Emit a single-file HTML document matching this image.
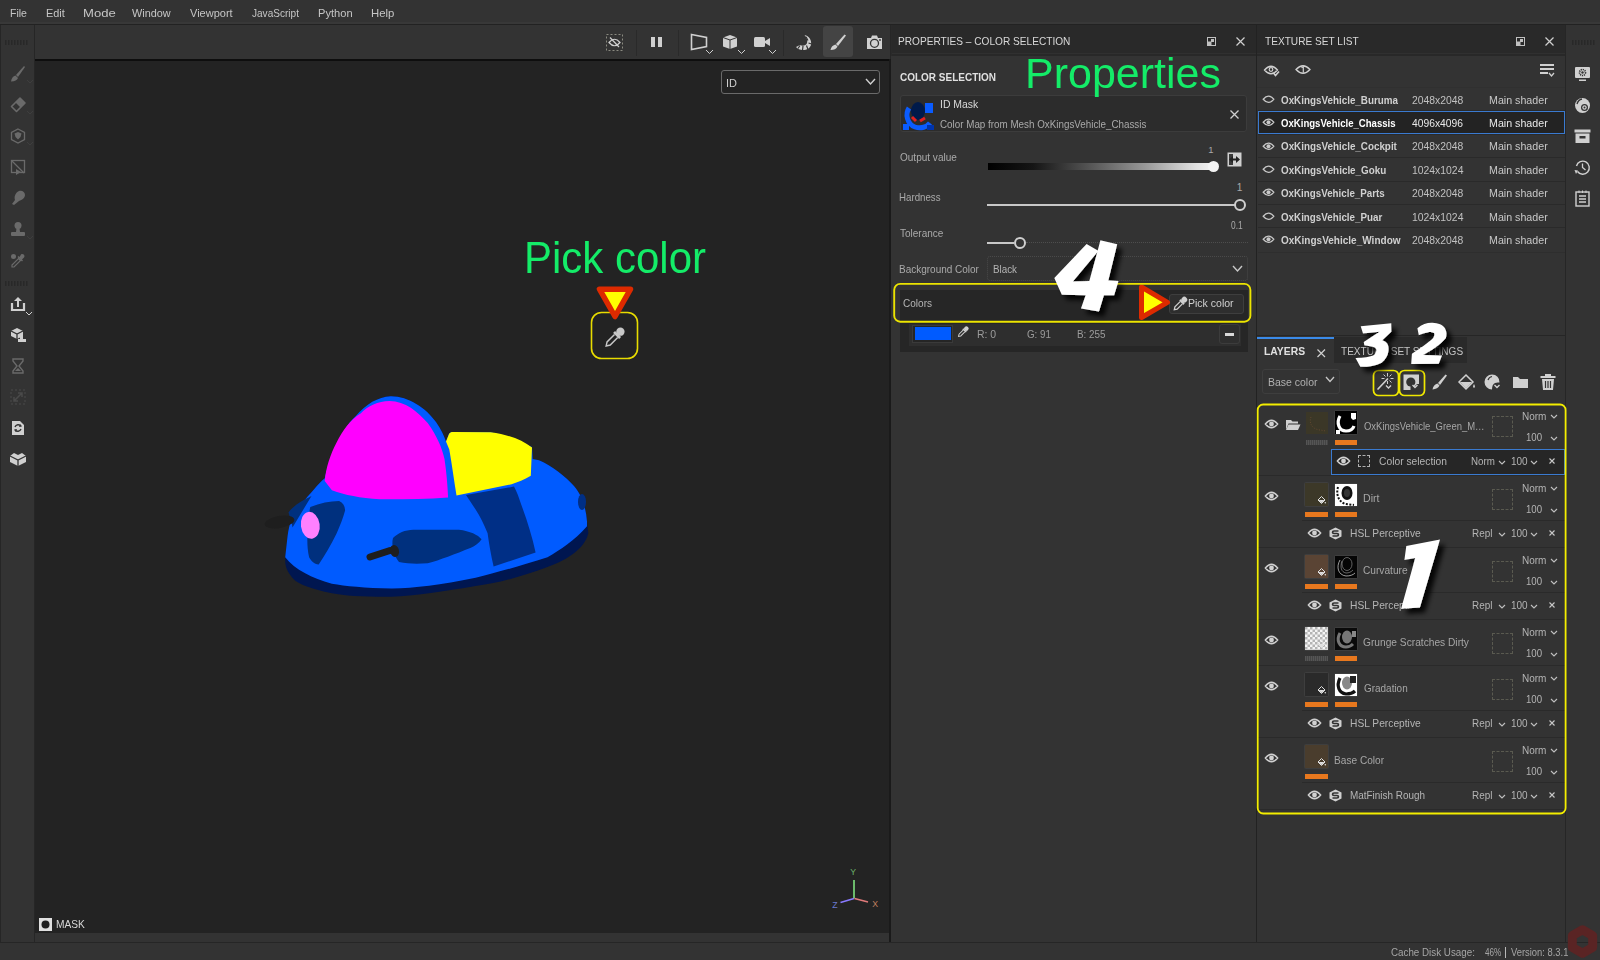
<!DOCTYPE html>
<html><head><meta charset="utf-8"><style>
html,body{margin:0;padding:0;}
body{width:1600px;height:960px;overflow:hidden;position:relative;background:#333;font-family:"Liberation Sans",sans-serif;}
.a{position:absolute;}
.t{position:absolute;z-index:5;white-space:nowrap;transform-origin:0 0;line-height:normal;}
svg.a{overflow:visible;}
</style></head><body>
<div class="a" style="left:0px;top:0px;width:1600px;height:22px;background:#333;"></div>
<div class="a" style="left:0px;top:22px;width:1600px;height:2px;background:#383838;"></div>
<div class="a" style="left:0px;top:24px;width:1600px;height:1px;background:#222;"></div>
<div class="a" style="left:0px;top:25px;width:1px;height:918px;background:#262626;"></div>
<div class="a" style="left:1px;top:25px;width:33px;height:917px;background:#333;"></div>
<div class="a" style="left:34px;top:25px;width:1px;height:917px;background:#262626;"></div>
<div class="a" style="left:35px;top:25px;width:855px;height:34px;background:#333;"></div>
<div class="a" style="left:35px;top:59px;width:854px;height:2px;background:#0e0e0e;"></div>
<div class="a" style="left:35px;top:61px;width:854px;height:872px;background:#232323;"></div>
<div class="a" style="left:889px;top:59px;width:2px;height:883px;background:#1a1a1a;"></div>
<div class="a" style="left:890px;top:25px;width:1px;height:34px;background:#262626;"></div>
<div class="a" style="left:35px;top:933px;width:854px;height:9px;background:#333;"></div>
<div class="a" style="left:0px;top:942px;width:1600px;height:1px;background:#262626;"></div>
<div class="a" style="left:0px;top:943px;width:1600px;height:17px;background:#333;"></div>
<div class="a" style="left:891px;top:56px;width:365px;height:886px;background:#333;"></div>
<div class="a" style="left:891px;top:25px;width:1px;height:31px;background:#2a2a2a;"></div>
<div class="a" style="left:892px;top:25px;width:364px;height:31px;background:#333;"></div>
<div class="a" style="left:892px;top:25px;width:364px;height:28px;background:#292929;"></div>
<div class="a" style="left:892px;top:53px;width:364px;height:1px;background:#303030;"></div>
<div class="a" style="left:892px;top:54px;width:364px;height:2px;background:#282828;"></div>
<div class="a" style="left:1256px;top:25px;width:1px;height:917px;background:#222;"></div>
<div class="a" style="left:1257px;top:25px;width:308px;height:310px;background:#333;"></div>
<div class="a" style="left:1257px;top:25px;width:308px;height:28px;background:#292929;"></div>
<div class="a" style="left:1257px;top:53px;width:308px;height:1px;background:#303030;"></div>
<div class="a" style="left:1257px;top:54px;width:308px;height:2px;background:#282828;"></div>
<div class="a" style="left:1565px;top:25px;width:1px;height:917px;background:#262626;"></div>
<div class="a" style="left:1566px;top:25px;width:34px;height:917px;background:#333;"></div>
<div class="a" style="left:1257px;top:335px;width:308px;height:1px;background:#262626;"></div>
<div class="a" style="left:1257px;top:336px;width:308px;height:606px;background:#333;"></div>
<div class="t" style="left:9.76px;top:6.50px;font-size:11.48px;color:#c6c6c6;transform:scaleX(0.918);">File</div>
<div class="t" style="left:45.63px;top:6.50px;font-size:11.48px;color:#c6c6c6;transform:scaleX(0.951);">Edit</div>
<div class="t" style="left:83.35px;top:6.50px;font-size:11.48px;color:#c6c6c6;transform:scaleX(1.142);">Mode</div>
<div class="t" style="left:131.90px;top:6.50px;font-size:11.48px;color:#c6c6c6;transform:scaleX(0.947);">Window</div>
<div class="t" style="left:190.30px;top:6.50px;font-size:11.48px;color:#c6c6c6;transform:scaleX(0.961);">Viewport</div>
<div class="t" style="left:252.05px;top:6.50px;font-size:11.48px;color:#c6c6c6;transform:scaleX(0.877);">JavaScript</div>
<div class="t" style="left:318.31px;top:6.50px;font-size:11.48px;color:#c6c6c6;transform:scaleX(0.968);">Python</div>
<div class="t" style="left:371.39px;top:6.50px;font-size:11.48px;color:#c6c6c6;transform:scaleX(0.990);">Help</div>
<div class="t" style="left:897.69px;top:34.94px;font-size:11.34px;color:#d8d8d8;transform:scaleX(0.893);">PROPERTIES – COLOR SELECTION</div>
<div class="t" style="left:899.60px;top:71.13px;font-size:10.90px;color:#e0e0e0;font-weight:bold;transform:scaleX(0.917);">COLOR SELECTION</div>
<div class="a" style="left:900px;top:95px;width:347px;height:37px;background:#2c2c2c;border:1px solid #3c3c3c;border-radius:3px;box-sizing:border-box;"></div>
<div class="t" style="left:939.56px;top:97.96px;font-size:10.76px;color:#d8d8d8;transform:scaleX(0.971);">ID Mask</div>
<div class="t" style="left:939.51px;top:117.47px;font-size:11.63px;color:#aaaaaa;transform:scaleX(0.845);">Color Map from Mesh OxKingsVehicle_Chassis</div>
<div class="t" style="left:899.55px;top:150.47px;font-size:11.63px;color:#aaaaaa;transform:scaleX(0.862);">Output value</div>
<div class="t" style="left:1208.29px;top:143.95px;font-size:9.45px;color:#aaaaaa;">1</div>
<div class="t" style="left:899.22px;top:190.63px;font-size:10.90px;color:#aaaaaa;transform:scaleX(0.892);">Hardness</div>
<div class="t" style="left:1236.74px;top:181.79px;font-size:10.17px;color:#aaaaaa;">1</div>
<div class="t" style="left:899.80px;top:227.13px;font-size:10.90px;color:#aaaaaa;transform:scaleX(0.918);">Tolerance</div>
<div class="t" style="left:1230.71px;top:219.79px;font-size:10.17px;color:#aaaaaa;transform:scaleX(0.825);">0.1</div>
<div class="t" style="left:899.20px;top:262.47px;font-size:11.63px;color:#aaaaaa;transform:scaleX(0.859);">Background Color</div>
<div class="t" style="left:993.41px;top:262.47px;font-size:11.63px;color:#b4b4b4;transform:scaleX(0.845);">Black</div>
<div class="t" style="left:902.50px;top:297.79px;font-size:10.17px;color:#b4b4b4;transform:scaleX(0.988);">Colors</div>
<div class="t" style="left:1187.76px;top:297.99px;font-size:10.17px;color:#d0d0d0;transform:scaleX(1.036);">Pick color</div>
<div class="t" style="left:977.16px;top:327.47px;font-size:11.63px;color:#9c9c9c;transform:scaleX(0.900);">R: 0</div>
<div class="t" style="left:1026.51px;top:327.47px;font-size:11.63px;color:#9c9c9c;transform:scaleX(0.842);">G: 91</div>
<div class="t" style="left:1076.81px;top:327.47px;font-size:11.63px;color:#9c9c9c;transform:scaleX(0.851);">B: 255</div>
<div class="t" style="left:1264.80px;top:34.47px;font-size:11.63px;color:#d8d8d8;transform:scaleX(0.870);">TEXTURE SET LIST</div>
<div class="t" style="left:1281.21px;top:92.74px;font-size:11.77px;color:#d0d0d0;font-weight:bold;transform:scaleX(0.836);">OxKingsVehicle_Buruma</div>
<div class="t" style="left:1411.88px;top:92.74px;font-size:11.77px;color:#c0c0c0;transform:scaleX(0.881);">2048x2048</div>
<div class="t" style="left:1489.45px;top:92.74px;font-size:11.77px;color:#c8c8c8;transform:scaleX(0.907);">Main shader</div>
<div class="t" style="left:1281.22px;top:116.11px;font-size:11.77px;color:#ffffff;font-weight:bold;transform:scaleX(0.815);">OxKingsVehicle_Chassis</div>
<div class="t" style="left:1412.19px;top:116.11px;font-size:11.77px;color:#e8e8e8;transform:scaleX(0.875);">4096x4096</div>
<div class="t" style="left:1489.45px;top:116.11px;font-size:11.77px;color:#e8e8e8;transform:scaleX(0.907);">Main shader</div>
<div class="t" style="left:1281.21px;top:139.48px;font-size:11.77px;color:#d0d0d0;font-weight:bold;transform:scaleX(0.836);">OxKingsVehicle_Cockpit</div>
<div class="t" style="left:1411.88px;top:139.48px;font-size:11.77px;color:#c0c0c0;transform:scaleX(0.881);">2048x2048</div>
<div class="t" style="left:1489.45px;top:139.48px;font-size:11.77px;color:#c8c8c8;transform:scaleX(0.907);">Main shader</div>
<div class="t" style="left:1281.20px;top:162.85px;font-size:11.77px;color:#d0d0d0;font-weight:bold;transform:scaleX(0.839);">OxKingsVehicle_Goku</div>
<div class="t" style="left:1411.62px;top:162.85px;font-size:11.77px;color:#c0c0c0;transform:scaleX(0.883);">1024x1024</div>
<div class="t" style="left:1489.45px;top:162.85px;font-size:11.77px;color:#c8c8c8;transform:scaleX(0.907);">Main shader</div>
<div class="t" style="left:1281.21px;top:186.22px;font-size:11.77px;color:#d0d0d0;font-weight:bold;transform:scaleX(0.830);">OxKingsVehicle_Parts</div>
<div class="t" style="left:1411.88px;top:186.22px;font-size:11.77px;color:#c0c0c0;transform:scaleX(0.881);">2048x2048</div>
<div class="t" style="left:1489.45px;top:186.22px;font-size:11.77px;color:#c8c8c8;transform:scaleX(0.907);">Main shader</div>
<div class="t" style="left:1281.21px;top:209.59px;font-size:11.77px;color:#d0d0d0;font-weight:bold;transform:scaleX(0.832);">OxKingsVehicle_Puar</div>
<div class="t" style="left:1411.62px;top:209.59px;font-size:11.77px;color:#c0c0c0;transform:scaleX(0.883);">1024x1024</div>
<div class="t" style="left:1489.45px;top:209.59px;font-size:11.77px;color:#c8c8c8;transform:scaleX(0.907);">Main shader</div>
<div class="t" style="left:1281.20px;top:232.96px;font-size:11.77px;color:#d0d0d0;font-weight:bold;transform:scaleX(0.851);">OxKingsVehicle_Window</div>
<div class="t" style="left:1411.88px;top:232.96px;font-size:11.77px;color:#c0c0c0;transform:scaleX(0.881);">2048x2048</div>
<div class="t" style="left:1489.45px;top:232.96px;font-size:11.77px;color:#c8c8c8;transform:scaleX(0.907);">Main shader</div>
<div class="t" style="left:1264.33px;top:345.73px;font-size:10.47px;color:#e0e0e0;font-weight:bold;transform:scaleX(0.989);">LAYERS</div>
<div class="a" style="left:1334px;top:337px;width:133px;height:26px;background:#2a2a2a;"></div>
<div class="t" style="left:1341.30px;top:345.73px;font-size:10.47px;color:#c4c4c4;transform:scaleX(0.960);">TEXTURE SET SETTINGS</div>
<div class="t" style="left:1267.56px;top:375.47px;font-size:11.63px;color:#b0b0b0;transform:scaleX(0.901);">Base color</div>
<div class="t" style="left:726.01px;top:76.63px;font-size:10.90px;color:#d0d0d0;transform:scaleX(1.007);">ID</div>
<div class="t" style="left:55.68px;top:917.47px;font-size:11.63px;color:#d8d8d8;transform:scaleX(0.877);">MASK</div>
<div class="t" style="left:1391.21px;top:945.70px;font-size:11.05px;color:#a6a6a6;transform:scaleX(0.887);">Cache Disk Usage:</div>
<div class="t" style="left:1485.04px;top:945.70px;font-size:11.05px;color:#a6a6a6;transform:scaleX(0.735);">46%</div>
<div class="a" style="left:1505px;top:947px;width:1px;height:11px;background:#b8b8b8;"></div>
<div class="t" style="left:1510.70px;top:945.70px;font-size:11.05px;color:#a6a6a6;transform:scaleX(0.850);">Version: 8.3.1</div>
<svg class="a" style="left:5px;top:40px;" width="22" height="5" viewBox="0 0 22 5"><rect x="0" y="0" width="1.5" height="5" fill="#282828"/><rect x="3" y="0" width="1.5" height="5" fill="#282828"/><rect x="6" y="0" width="1.5" height="5" fill="#282828"/><rect x="9" y="0" width="1.5" height="5" fill="#282828"/><rect x="12" y="0" width="1.5" height="5" fill="#282828"/><rect x="15" y="0" width="1.5" height="5" fill="#282828"/><rect x="18" y="0" width="1.5" height="5" fill="#282828"/><rect x="21" y="0" width="1.5" height="5" fill="#282828"/></svg>
<svg class="a" style="left:5px;top:281px;" width="22" height="5" viewBox="0 0 22 5"><rect x="0" y="0" width="1.5" height="5" fill="#282828"/><rect x="3" y="0" width="1.5" height="5" fill="#282828"/><rect x="6" y="0" width="1.5" height="5" fill="#282828"/><rect x="9" y="0" width="1.5" height="5" fill="#282828"/><rect x="12" y="0" width="1.5" height="5" fill="#282828"/><rect x="15" y="0" width="1.5" height="5" fill="#282828"/><rect x="18" y="0" width="1.5" height="5" fill="#282828"/><rect x="21" y="0" width="1.5" height="5" fill="#282828"/></svg>
<svg class="a" style="left:1572px;top:40px;" width="22" height="5" viewBox="0 0 22 5"><rect x="0" y="0" width="1.5" height="5" fill="#282828"/><rect x="3" y="0" width="1.5" height="5" fill="#282828"/><rect x="6" y="0" width="1.5" height="5" fill="#282828"/><rect x="9" y="0" width="1.5" height="5" fill="#282828"/><rect x="12" y="0" width="1.5" height="5" fill="#282828"/><rect x="15" y="0" width="1.5" height="5" fill="#282828"/><rect x="18" y="0" width="1.5" height="5" fill="#282828"/><rect x="21" y="0" width="1.5" height="5" fill="#282828"/></svg>
<svg class="a" style="left:10px;top:66px;" width="16" height="16" viewBox="0 0 16 16"><path d="M15,1 L14,0 L6,9 L8,11 Z" fill="#6a6a6a"/><path d="M5.5,9.5 L8,12 C7,14 5,15.5 1,15.5 C1.5,12 3,10.5 5.5,9.5Z" fill="#6a6a6a"/></svg>
<svg class="a" style="left:26px;top:79px;" width="8" height="5" viewBox="0 0 8 5"><path d="M1,1 L4.0,4 L7,1" fill="none" stroke="#3e3e3e" stroke-width="1"/></svg>
<svg class="a" style="left:10px;top:97px;" width="16" height="16" viewBox="0 0 16 16"><path d="M10,1 L15,6 L6.5,14.5 L1.5,9.5 Z" fill="none" stroke="#6a6a6a" stroke-width="1.6" stroke-linejoin="round"/><path d="M10,1 L15,6 L10.5,10.5 L5.5,5.5Z" fill="#6a6a6a"/></svg>
<svg class="a" style="left:26px;top:110px;" width="8" height="5" viewBox="0 0 8 5"><path d="M1,1 L4.0,4 L7,1" fill="none" stroke="#3e3e3e" stroke-width="1"/></svg>
<svg class="a" style="left:10px;top:128px;" width="16" height="16" viewBox="0 0 16 16"><path d="M8,1 L14.5,4.5 L14.5,11.5 L8,15 L1.5,11.5 L1.5,4.5Z" fill="none" stroke="#6a6a6a" stroke-width="1.3"/><path d="M4.5,5.5 L8,4 L11.5,5.5 L10.5,9 L8,11.5 L5.5,9Z" fill="#6a6a6a"/></svg>
<svg class="a" style="left:26px;top:141px;" width="8" height="5" viewBox="0 0 8 5"><path d="M1,1 L4.0,4 L7,1" fill="none" stroke="#3e3e3e" stroke-width="1"/></svg>
<svg class="a" style="left:10px;top:159px;" width="16" height="16" viewBox="0 0 16 16"><rect x="1.5" y="1.5" width="13" height="12" fill="none" stroke="#6a6a6a" stroke-width="1.3"/><path d="M2,2 L14,14" stroke="#6a6a6a" stroke-width="1.3"/><path d="M6,10 L6,16 L11,13Z" fill="#6a6a6a"/></svg>
<svg class="a" style="left:10px;top:190px;" width="16" height="16" viewBox="0 0 16 16"><path d="M9,1 C12,0 15,2 15,5 C15,8 12,10 9,11 L4,15 L2,14 L5,10 C4,7 5,3 9,1Z" fill="#6a6a6a"/></svg>
<svg class="a" style="left:10px;top:222px;" width="16" height="16" viewBox="0 0 16 16"><circle cx="8" cy="3.5" r="3.5" fill="#6a6a6a"/><path d="M6.5,6 L9.5,6 L10,10 L6,10Z" fill="#6a6a6a"/><rect x="1" y="10" width="14" height="4" rx="1" fill="#6a6a6a"/></svg>
<svg class="a" style="left:26px;top:235px;" width="8" height="5" viewBox="0 0 8 5"><path d="M1,1 L4.0,4 L7,1" fill="none" stroke="#3e3e3e" stroke-width="1"/></svg>
<svg class="a" style="left:10px;top:253px;" width="16" height="16" viewBox="0 0 16 16"><circle cx="3.5" cy="3.5" r="2.5" fill="#6a6a6a"/><path d="M11,1.5 C13,0 15.5,2.5 14,4.5 L12,6.5 L13,7.5 L12,8.5 L7.5,4 L8.5,3 L9.5,4Z" fill="#6a6a6a"/><path d="M8.5,5.5 L10.5,7.5 L4,14 L2,14 L2,12Z" fill="none" stroke="#6a6a6a" stroke-width="1.2"/></svg>
<svg class="a" style="left:10px;top:296px;" width="16" height="16" viewBox="0 0 16 16"><path d="M2,7 L2,14 L14,14 L14,7" fill="none" stroke="#d0d0d0" stroke-width="2.2"/><path d="M8,1 L4,5 L7,5 L7,11 L9,11 L9,5 L12,5Z" fill="#d0d0d0"/></svg>
<svg class="a" style="left:25px;top:311px;" width="8" height="5" viewBox="0 0 8 5"><path d="M1,1 L4.0,4 L7,1" fill="none" stroke="#d0d0d0" stroke-width="1"/></svg>
<svg class="a" style="left:10px;top:327px;" width="18" height="16" viewBox="0 0 18 16"><path d="M1,4 L7,1 L13,4 L13,9 L7,12 L1,9Z" fill="#d0d0d0"/><path d="M1,4 L7,7 L13,4 M7,7 L7,12" stroke="#333" stroke-width="1.3" fill="none"/><rect x="10" y="8" width="3" height="5" fill="#d0d0d0"/><rect x="8" y="12" width="8" height="3" fill="#d0d0d0"/></svg>
<svg class="a" style="left:10px;top:358px;" width="16" height="16" viewBox="0 0 16 16"><path d="M3,1 L13,1 L13,3 L9,8 L13,13 L13,15 L3,15 L3,13 L7,8 L3,3Z" fill="none" stroke="#6a6a6a" stroke-width="1.4"/><path d="M5,13 L8,10 L11,13Z" fill="#6a6a6a"/></svg>
<svg class="a" style="left:10px;top:389px;" width="16" height="16" viewBox="0 0 16 16"><path d="M1,1 L15,1 L15,15 L1,15Z" fill="none" stroke="#4a4a4a" stroke-width="1" stroke-dasharray="2,2"/><path d="M4,12 L12,4 M8,4 L12,4 L12,8 M4,8 L4,12 L8,12" fill="none" stroke="#4a4a4a" stroke-width="1.5"/></svg>
<svg class="a" style="left:11px;top:420px;" width="14" height="16" viewBox="0 0 14 16"><path d="M1,1 L9,1 L13,5 L13,15 L1,15Z" fill="#d0d0d0"/><path d="M4,7 A3.5,3.5 0 0 1 10,6 M10,9 A3.5,3.5 0 0 1 4,10" fill="none" stroke="#333" stroke-width="1.4"/><path d="M9,4 L11,6.5 L8,7Z M5,12 L3,9.5 L6,9Z" fill="#333"/></svg>
<svg class="a" style="left:9px;top:451px;" width="18" height="16" viewBox="0 0 18 16"><path d="M1,5 L5,2 L9,4 L13,2 L17,5 L17,11 L9,15 L1,11Z" fill="#d0d0d0"/><path d="M1,5 L9,9 L17,5 M9,9 L9,15" stroke="#333" stroke-width="1.3" fill="none"/></svg>
<svg class="a" style="left:606px;top:34px;" width="17" height="17" viewBox="0 0 17 17"><rect x="0.5" y="0.5" width="16" height="16" fill="none" stroke="#8a8a80" stroke-width="1" stroke-dasharray="2,2"/><path d="M3,8.5 Q8.5,2 14,8.5 Q8.5,15 3,8.5Z" fill="none" stroke="#d0d0d0" stroke-width="1.2"/><path d="M4,3.5 L13,13" stroke="#d0d0d0" stroke-width="1.2"/></svg>
<div class="a" style="left:636px;top:30px;width:1px;height:26px;background:#2a2a2a;"></div>
<div class="a" style="left:651px;top:37px;width:4px;height:10px;background:#d0d0d0;"></div>
<div class="a" style="left:658px;top:37px;width:4px;height:10px;background:#d0d0d0;"></div>
<div class="a" style="left:678px;top:30px;width:1px;height:26px;background:#2a2a2a;"></div>
<svg class="a" style="left:690px;top:33px;" width="19" height="19" viewBox="0 0 19 19"><path d="M1.5,1.5 L16.5,4.5 L16.5,13.5 L1.5,16.5Z" fill="none" stroke="#d0d0d0" stroke-width="1.6"/></svg>
<svg class="a" style="left:705px;top:49px;" width="9" height="5.5" viewBox="0 0 9 5.5"><path d="M1,1 L4.5,4.5 L8,1" fill="none" stroke="#d0d0d0" stroke-width="1"/></svg>
<svg class="a" style="left:722px;top:34px;" width="16" height="16" viewBox="0 0 16 16"><path d="M8,1 L15,3.5 L15,12.5 L8,15 L1,12.5 L1,3.5Z" fill="#d0d0d0"/><path d="M1,3.5 L8,6 L15,3.5 M8,6 L8,15" stroke="#333" stroke-width="1" fill="none"/></svg>
<svg class="a" style="left:737px;top:49px;" width="9" height="5.5" viewBox="0 0 9 5.5"><path d="M1,1 L4.5,4.5 L8,1" fill="none" stroke="#d0d0d0" stroke-width="1"/></svg>
<svg class="a" style="left:753px;top:36px;" width="18" height="12" viewBox="0 0 18 12"><rect x="1" y="1" width="11" height="10" rx="1.5" fill="#d0d0d0"/><path d="M12,5 L17,2 L17,10 L12,7Z" fill="#d0d0d0"/></svg>
<svg class="a" style="left:768px;top:49px;" width="9" height="5.5" viewBox="0 0 9 5.5"><path d="M1,1 L4.5,4.5 L8,1" fill="none" stroke="#d0d0d0" stroke-width="1"/></svg>
<div class="a" style="left:783px;top:30px;width:1px;height:26px;background:#2a2a2a;"></div>
<svg class="a" style="left:795px;top:34px;" width="18" height="17" viewBox="0 0 18 17"><path d="M9.5,1 C14,2 17,6 16,11 C15,14 12,16 8,16 C5,16 2.5,15 1,13 L5,11 C7,12 10,12 11.5,10 C13,8 12.5,4 9.5,1Z" fill="#d0d0d0"/><path d="M11,2.8 L13,6.5 M13.5,9 L16.5,10 M11.5,11.5 L13,15.5 M8,12 L7.5,16.5 M5,11.5 L3,14.5" stroke="#333" stroke-width="1.2"/></svg>
<div class="a" style="left:823px;top:26px;width:30px;height:31px;background:#444;border-radius:3px;"></div>
<svg class="a" style="left:830px;top:34px;" width="17" height="17" viewBox="0 0 17 17"><path d="M16,1.5 L14.5,0.5 L6,10 L8,12Z" fill="#d0d0d0"/><path d="M5.5,10.5 L7.5,12.5 C6.5,15 4,16 0.5,16 C1,13 3,11 5.5,10.5Z" fill="#d0d0d0"/></svg>
<svg class="a" style="left:866px;top:34px;" width="17" height="16" viewBox="0 0 17 16"><path d="M1,4 L5,4 L6,1.5 L11,1.5 L12,4 L16,4 L16,15 L1,15Z" fill="#d0d0d0"/><circle cx="8.5" cy="9.3" r="4" fill="none" stroke="#333" stroke-width="1.3"/><circle cx="14" cy="6" r="0.9" fill="#333"/></svg>
<div class="a" style="left:721px;top:70px;width:159px;height:24px;border:1px solid #6a6a6a;border-radius:3px;box-sizing:border-box;"></div>
<svg class="a" style="left:865px;top:78px;" width="11" height="7" viewBox="0 0 11 7"><path d="M1,1 L5.5,6 L10,1" fill="none" stroke="#d0d0d0" stroke-width="1.4"/></svg>
<svg class="a" style="left:39px;top:918px;" width="13" height="13" viewBox="0 0 13 13"><rect x="0" y="0" width="13" height="13" fill="#e0e0e0"/><circle cx="6.5" cy="6.5" r="4" fill="#1e1e1e"/></svg>
<svg class="a" style="left:825px;top:860px;" width="60" height="55" viewBox="0 0 60 55"><path d="M29,38.5 L29,20" stroke="#7ee07e" stroke-width="1.6"/><path d="M29,38.5 L15.5,42.5" stroke="#8a7aff" stroke-width="1.6"/><path d="M29.5,38.5 L43,42" stroke="#e07a7a" stroke-width="1.6"/></svg>
<div class="t" style="left:850.33px;top:866.60px;font-size:8.72px;color:#6ab06a;">Y</div>
<div class="t" style="left:832.24px;top:900.10px;font-size:8.72px;color:#6a7ad0;">Z</div>
<div class="t" style="left:872.33px;top:899.10px;font-size:8.72px;color:#c08060;">X</div>
<svg class="a" style="left:1207px;top:37px;" width="9" height="9" viewBox="0 0 9 9"><rect x="0.5" y="0.5" width="8" height="8" fill="none" stroke="#c0c0c0" stroke-width="1"/><rect x="0.5" y="4.5" width="4" height="4" fill="#c0c0c0"/><rect x="4" y="2" width="3" height="3" fill="#c0c0c0"/></svg>
<svg class="a" style="left:1236px;top:36.5px;" width="9" height="9" viewBox="0 0 9 9"><path d="M0.5,0.5 L8.5,8.5 M8.5,0.5 L0.5,8.5" stroke="#d0d0d0" stroke-width="1.2"/></svg>
<svg class="a" style="left:1516px;top:37px;" width="9" height="9" viewBox="0 0 9 9"><rect x="0.5" y="0.5" width="8" height="8" fill="none" stroke="#c0c0c0" stroke-width="1"/><rect x="0.5" y="4.5" width="4" height="4" fill="#c0c0c0"/><rect x="4" y="2" width="3" height="3" fill="#c0c0c0"/></svg>
<svg class="a" style="left:1545px;top:36.5px;" width="9" height="9" viewBox="0 0 9 9"><path d="M0.5,0.5 L8.5,8.5 M8.5,0.5 L0.5,8.5" stroke="#d0d0d0" stroke-width="1.2"/></svg>
<svg class="a" style="left:903px;top:100px;" width="33" height="31" viewBox="0 0 33 31"><path d="M6,8 C2,14 4,24 12,27 C18,29 24,27 27,23" fill="none" stroke="#0a5cff" stroke-width="5"/><ellipse cx="15" cy="11" rx="7" ry="9" fill="#001a4a"/><path d="M9,17 L13,21 M17,21 L22,18" stroke="#e02020" stroke-width="3"/><rect x="22" y="3" width="8" height="10" fill="#0a5cff"/><rect x="0" y="24" width="6" height="6" fill="#0a5cff"/><rect x="24" y="25" width="7" height="5" fill="#0033aa"/></svg>
<svg class="a" style="left:1229.5px;top:109.5px;" width="9" height="9" viewBox="0 0 9 9"><path d="M0.5,0.5 L8.5,8.5 M8.5,0.5 L0.5,8.5" stroke="#d0d0d0" stroke-width="1.3"/></svg>
<div class="a" style="left:988px;top:163px;width:226px;height:7px;background:linear-gradient(90deg,#000 0%,#151515 20%,#555 45%,#999 70%,#e0e0e0 92%,#f4f4f4 100%);border-radius:0 3px 3px 0;"></div>
<svg class="a" style="left:1207px;top:160px;" width="13" height="13" viewBox="0 0 13 13"><circle cx="6.5" cy="6.5" r="5.5" fill="#f4f4f4"/></svg>
<svg class="a" style="left:1227px;top:152px;" width="15" height="15" viewBox="0 0 15 15"><rect x="0.5" y="0.5" width="14" height="14" fill="#d0d0d0"/><rect x="2" y="2" width="4" height="11" fill="#3a3a3a"/><path d="M2,7.5 L6,4 L6,11Z M13,7.5 L9,4 L9,11Z" fill="#222"/><rect x="5" y="6.5" width="5" height="2" fill="#222"/></svg>
<div class="a" style="left:987px;top:203.5px;width:248px;height:2px;background:#c8c8c8;"></div>
<svg class="a" style="left:1233px;top:197.5px;" width="14" height="14" viewBox="0 0 14 14"><circle cx="7" cy="7" r="5" fill="#333" stroke="#d0d0d0" stroke-width="2"/></svg>
<div class="a" style="left:987px;top:241.5px;width:27px;height:2px;background:#c8c8c8;"></div>
<svg class="a" style="left:1013px;top:236px;" width="14" height="14" viewBox="0 0 14 14"><circle cx="7" cy="7" r="5" fill="#333" stroke="#d0d0d0" stroke-width="2"/></svg>
<div class="a" style="left:1026px;top:242px;width:222px;height:1px;border-top:1px dotted #4e4e4e;"></div>
<div class="a" style="left:987px;top:256px;width:261px;height:25px;border:1px dotted #4a4a4a;border-radius:3px;box-sizing:border-box;"></div>
<svg class="a" style="left:1232px;top:265px;" width="11" height="7" viewBox="0 0 11 7"><path d="M1,1 L5.5,6 L10,1" fill="none" stroke="#c8c8c8" stroke-width="1.4"/></svg>
<div class="a" style="left:900px;top:290px;width:348px;height:62px;background:#262626;"></div>
<div class="a" style="left:909px;top:324px;width:332px;height:22px;background:#2e2e2e;"></div>
<div class="a" style="left:912px;top:325px;width:41px;height:18px;background:#252525;border:1px solid #3a3a3a;box-sizing:border-box;"></div>
<div class="a" style="left:915px;top:327px;width:36px;height:13px;background:#005bff;"></div>
<svg class="a" style="left:956px;top:325px;" width="14" height="14" viewBox="0 0 16 16"><g transform="rotate(45 8 8)"><circle cx="8" cy="2.6" r="2.6" fill="#d0d0d0"/><rect x="5.3" y="4.6" width="5.4" height="1.8" rx="0.5" fill="#d0d0d0"/><path d="M6.6,6.4 L6.6,13 L8,15.2 L9.4,13 L9.4,6.4" fill="none" stroke="#d0d0d0" stroke-width="1.1"/></g></svg>
<div class="a" style="left:1219px;top:324px;width:21px;height:20px;border:1px solid #3c3c3c;border-radius:3px;box-sizing:border-box;"></div>
<div class="a" style="left:1225px;top:333px;width:9px;height:2.5px;background:#d8d8d8;"></div>
<div class="a" style="left:1168.5px;top:293.5px;width:75px;height:20px;background:#2e2e2e;border:1px solid #3e3e3e;border-radius:3px;box-sizing:border-box;"></div>
<svg class="a" style="left:1171px;top:294.5px;" width="18" height="18" viewBox="0 0 16 16"><g transform="rotate(45 8 8)"><circle cx="8" cy="2.6" r="2.6" fill="#d0d0d0"/><rect x="5.3" y="4.6" width="5.4" height="1.8" rx="0.5" fill="#d0d0d0"/><path d="M6.6,6.4 L6.6,13 L8,15.2 L9.4,13 L9.4,6.4" fill="none" stroke="#d0d0d0" stroke-width="1.1"/></g></svg>
<svg class="a" style="left:1263px;top:64px;" width="18" height="14" viewBox="0 0 18 14"><path d="M1.5,6 Q8,-1.5 14.5,6 Q8,13.5 1.5,6Z" fill="none" stroke="#d0d0d0" stroke-width="1.3"/><circle cx="8" cy="5.5" r="1.8" fill="none" stroke="#d0d0d0" stroke-width="1.2"/><path d="M10.5,9 L12.5,11.5 L16,7.5" fill="none" stroke="#d0d0d0" stroke-width="1.6"/></svg>
<svg class="a" style="left:1295px;top:64px;" width="16" height="12" viewBox="0 0 16 12"><path d="M1,5.5 Q8,-2 15,5.5 Q8,13 1,5.5Z" fill="none" stroke="#d0d0d0" stroke-width="1.3"/><path d="M6.5,3.8 L8.3,2.8 L8.3,8.8" fill="none" stroke="#d0d0d0" stroke-width="1.2"/></svg>
<svg class="a" style="left:1539px;top:63px;" width="17" height="16" viewBox="0 0 17 16"><rect x="1" y="1" width="14" height="2" fill="#d0d0d0"/><rect x="1" y="5" width="14" height="2" fill="#d0d0d0"/><rect x="1" y="9" width="8" height="2" fill="#d0d0d0"/><path d="M10,10 L12.5,13 L15,10" fill="none" stroke="#d0d0d0" stroke-width="1.3"/></svg>
<div class="a" style="left:1257px;top:87px;width:308px;height:1px;background:#303030;"></div>
<div class="a" style="left:1258px;top:110px;width:307px;height:1px;background:#2a2a2a;"></div>
<div class="a" style="left:1258px;top:134px;width:307px;height:1px;background:#2a2a2a;"></div>
<div class="a" style="left:1258px;top:157px;width:307px;height:1px;background:#2a2a2a;"></div>
<div class="a" style="left:1258px;top:181px;width:307px;height:1px;background:#2a2a2a;"></div>
<div class="a" style="left:1258px;top:204px;width:307px;height:1px;background:#2a2a2a;"></div>
<div class="a" style="left:1258px;top:227px;width:307px;height:1px;background:#2a2a2a;"></div>
<div class="a" style="left:1258px;top:111px;width:307px;height:23px;background:#232323;border:1px solid #3a7ad0;box-sizing:border-box;"></div>
<div class="a" style="left:1258px;top:252px;width:307px;height:1px;background:#2e2e2e;"></div>
<svg class="a" style="left:1262px;top:95px;" width="13" height="8.5" viewBox="0 0 13 8.5"><path d="M1.2,4.25 Q6.5,-2.125 11.8,4.25 Q6.5,10.625 1.2,4.25Z" fill="none" stroke="#c8c8c8" stroke-width="1.2"/></svg>
<svg class="a" style="left:1262px;top:118px;" width="13" height="8.5" viewBox="0 0 13 8.5"><path d="M1.2,4.25 Q6.5,-2.125 11.8,4.25 Q6.5,10.625 1.2,4.25Z" fill="none" stroke="#c8c8c8" stroke-width="1.2"/><circle cx="6.5" cy="4.25" r="2.04" fill="#c8c8c8"/></svg>
<svg class="a" style="left:1262px;top:142px;" width="13" height="8.5" viewBox="0 0 13 8.5"><path d="M1.2,4.25 Q6.5,-2.125 11.8,4.25 Q6.5,10.625 1.2,4.25Z" fill="none" stroke="#c8c8c8" stroke-width="1.2"/><circle cx="6.5" cy="4.25" r="2.04" fill="#c8c8c8"/></svg>
<svg class="a" style="left:1262px;top:165px;" width="13" height="8.5" viewBox="0 0 13 8.5"><path d="M1.2,4.25 Q6.5,-2.125 11.8,4.25 Q6.5,10.625 1.2,4.25Z" fill="none" stroke="#c8c8c8" stroke-width="1.2"/></svg>
<svg class="a" style="left:1262px;top:188px;" width="13" height="8.5" viewBox="0 0 13 8.5"><path d="M1.2,4.25 Q6.5,-2.125 11.8,4.25 Q6.5,10.625 1.2,4.25Z" fill="none" stroke="#c8c8c8" stroke-width="1.2"/><circle cx="6.5" cy="4.25" r="2.04" fill="#c8c8c8"/></svg>
<svg class="a" style="left:1262px;top:212px;" width="13" height="8.5" viewBox="0 0 13 8.5"><path d="M1.2,4.25 Q6.5,-2.125 11.8,4.25 Q6.5,10.625 1.2,4.25Z" fill="none" stroke="#c8c8c8" stroke-width="1.2"/></svg>
<svg class="a" style="left:1262px;top:235px;" width="13" height="8.5" viewBox="0 0 13 8.5"><path d="M1.2,4.25 Q6.5,-2.125 11.8,4.25 Q6.5,10.625 1.2,4.25Z" fill="none" stroke="#c8c8c8" stroke-width="1.2"/><circle cx="6.5" cy="4.25" r="2.04" fill="#c8c8c8"/></svg>
<svg class="a" style="left:1574px;top:66px;" width="17" height="16" viewBox="0 0 17 16"><rect x="1" y="1" width="15" height="11" rx="1" fill="#d0d0d0"/><rect x="5" y="13.5" width="7" height="1.5" fill="#d0d0d0"/><circle cx="8.5" cy="6.5" r="3" fill="none" stroke="#333" stroke-width="1.6" stroke-dasharray="1.2,0.8"/><circle cx="8.5" cy="6.5" r="1.2" fill="#333"/></svg>
<svg class="a" style="left:1574px;top:97px;" width="17" height="17" viewBox="0 0 17 17"><circle cx="8.5" cy="8.5" r="7.5" fill="#d0d0d0"/><path d="M3,7 Q4,3 8,2" stroke="#333" stroke-width="1.3" fill="none"/><circle cx="10.5" cy="10.5" r="3.5" fill="#333"/><circle cx="10.5" cy="10.5" r="2.2" fill="#d0d0d0"/><circle cx="10.5" cy="10.5" r="1" fill="#333"/></svg>
<svg class="a" style="left:1574px;top:129px;" width="17" height="15" viewBox="0 0 17 15"><rect x="0.5" y="0.5" width="16" height="3" fill="#d0d0d0"/><rect x="1.5" y="4.5" width="14" height="9.5" fill="#d0d0d0"/><rect x="5.5" y="7" width="6" height="2.5" fill="#333"/></svg>
<svg class="a" style="left:1574px;top:159px;" width="17" height="17" viewBox="0 0 17 17"><path d="M3.5,12.5 A6.5,6.5 0 1 0 2.5,7" fill="none" stroke="#d0d0d0" stroke-width="1.4"/><path d="M8.5,4.5 L8.5,8.5 L11.5,11" fill="none" stroke="#d0d0d0" stroke-width="1.3"/><path d="M0.5,11 L4,11.5 L2,15Z" fill="#d0d0d0"/></svg>
<svg class="a" style="left:1575px;top:190px;" width="15" height="17" viewBox="0 0 15 17"><rect x="1" y="2" width="13" height="14" fill="none" stroke="#d0d0d0" stroke-width="1.4"/><path d="M4,6 L11,6 M4,9 L11,9 M4,12 L11,12" stroke="#d0d0d0" stroke-width="1.3"/><path d="M4,0.5 L4,3 M7.5,0.5 L7.5,3 M11,0.5 L11,3" stroke="#d0d0d0" stroke-width="1"/></svg>
<div class="a" style="left:1257px;top:337px;width:77px;height:2px;background:#3a8ae8;"></div>
<svg class="a" style="left:1316.5px;top:348.5px;" width="8.5" height="8.5" viewBox="0 0 8.5 8.5"><path d="M0.5,0.5 L8.0,8.0 M8.0,0.5 L0.5,8.0" stroke="#d0d0d0" stroke-width="1.2"/></svg>
<div class="a" style="left:1262px;top:369px;width:78px;height:25px;border:1px solid #3e3e3e;border-radius:3px;box-sizing:border-box;"></div>
<svg class="a" style="left:1325px;top:376px;" width="10" height="6.5" viewBox="0 0 10 6.5"><path d="M1,1 L5.0,5.5 L9,1" fill="none" stroke="#c8c8c8" stroke-width="1.3"/></svg>
<svg class="a" style="left:1376px;top:372px;" width="18" height="19" viewBox="0 0 18 19"><path d="M2,17 L11.5,7" stroke="#d0d0d0" stroke-width="1.7" stroke-linecap="round"/><path d="M11.5,1 L11.5,4.5 M11.5,9 L11.5,12 M5.5,6.5 L8.5,6.5 M14.5,6.5 L17.5,6.5 M7.5,2.5 L9.5,4.5 M13.5,8.5 L15.5,10.5 M15.5,2.5 L13.5,4.5" stroke="#d0d0d0" stroke-width="1"/><path d="M10,13.5 L12.5,16 L15,13.5" fill="none" stroke="#d0d0d0" stroke-width="1.4"/></svg>
<svg class="a" style="left:1403px;top:373.5px;" width="17" height="17" viewBox="0 0 17 17"><path d="M0.5,0.5 L16,0.5 L16,10 L14,10 L11,13 L8.5,10.5 L7.5,10.5 L7.5,16 L0.5,16Z" fill="#d0d0d0"/><circle cx="7.8" cy="8" r="4.6" fill="#333"/><path d="M9.5,11 L12,13.5 L14.5,11" fill="none" stroke="#d0d0d0" stroke-width="1.4"/></svg>
<svg class="a" style="left:1432px;top:374px;" width="16" height="16" viewBox="0 0 16 16"><path d="M15,1.5 L13.5,0.5 L6,9 L8,11Z" fill="#d0d0d0"/><path d="M5.5,9.5 L7.5,11.5 C6.5,14 4,15 0.5,15.5 C1,12.5 3,10 5.5,9.5Z" fill="#d0d0d0"/></svg>
<svg class="a" style="left:1458px;top:374px;" width="18" height="17" viewBox="0 0 18 17"><path d="M8,1 L15,8 L8,15 L1,8Z" fill="none" stroke="#d0d0d0" stroke-width="1.5"/><path d="M2,8 L14,8 L8,14.5Z" fill="#d0d0d0"/><path d="M16,10 C17,12 17.5,13 16,14 C14.5,13 15,12 16,10Z" fill="#d0d0d0"/></svg>
<svg class="a" style="left:1484px;top:374px;" width="18" height="16" viewBox="0 0 18 16"><path d="M8,0.5 A7.5,7.5 0 1 0 8,15.5 L8,15.5 C8,12 9,10 11,9 C13,8 15,8.5 15.5,8.5 A7.5,7.5 0 0 0 8,0.5Z" fill="#d0d0d0"/><path d="M4,6 Q5,3 8,2.5" stroke="#333" stroke-width="1.2" fill="none"/><path d="M10.5,11 L13,13.5 L15.5,11" fill="none" stroke="#d0d0d0" stroke-width="1.4"/></svg>
<svg class="a" style="left:1512px;top:376px;" width="17" height="13" viewBox="0 0 17 13"><path d="M1,1 L6,1 L8,3 L16,3 L16,12 L1,12Z" fill="#d0d0d0"/></svg>
<svg class="a" style="left:1540px;top:374px;" width="16" height="17" viewBox="0 0 16 17"><rect x="0.5" y="2" width="15" height="2" fill="#d0d0d0"/><rect x="5" y="0" width="6" height="2" fill="#d0d0d0"/><path d="M2,5 L14,5 L13,16 L3,16Z" fill="#d0d0d0"/><path d="M5.5,7 L5.5,14 M8,7 L8,14 M10.5,7 L10.5,14" stroke="#333" stroke-width="1.2"/></svg>
<svg class="a" style="left:1264px;top:419px;" width="15" height="10" viewBox="0 0 15 10"><path d="M1.3,5.0 Q7.5,-2.5 13.7,5.0 Q7.5,12.5 1.3,5.0Z" fill="none" stroke="#d0d0d0" stroke-width="1.3"/><circle cx="7.5" cy="5.0" r="2.4" fill="#d0d0d0"/></svg>
<svg class="a" style="left:1285px;top:419px;" width="16" height="12" viewBox="0 0 16 12"><path d="M1,1 L6,1 L7.5,2.5 L13,2.5 L13,4.5 L3.5,4.5 L1,11Z" fill="#d0d0d0"/><path d="M3.5,5.5 L15.5,5.5 L13,11 L1,11Z" fill="#d0d0d0"/></svg>
<div class="a" style="left:1306px;top:412px;width:22px;height:22px;background:#3b3727;"></div>
<svg class="a" style="left:1306px;top:412px;" width="22" height="22" viewBox="0 0 22 22"><path d="M5,5 C3,10 5,17 14,18 L20,19" fill="none" stroke="#6a4a30" stroke-width="0.8" stroke-dasharray="1,1.5"/></svg>
<div class="a" style="left:1306px;top:440px;width:22px;height:5px;background:repeating-linear-gradient(90deg,#555 0 1px,#444 1px 2px);"></div>
<div class="a" style="left:1334px;top:410px;width:24px;height:25px;background:#3e3e3e;border-radius:2px;"></div>
<svg class="a" style="left:1335px;top:411px;" width="22" height="23" viewBox="0 0 22 23"><rect width="22" height="23" fill="#000"/><path d="M5,5 C1,12 4,20 11,20 C15,20 18,18 19,15" fill="none" stroke="#fff" stroke-width="3.2"/><path d="M16,2 L21,2 L21,8 L18,9 L16,7Z" fill="#fff"/><rect x="1" y="19" width="4" height="4" fill="#fff"/></svg>
<div class="a" style="left:1335px;top:440px;width:22px;height:5px;background:#e8781e;"></div>
<div class="t" style="left:1363.57px;top:419.54px;font-size:11.34px;color:#a6a6a6;transform:scaleX(0.836);">OxKingsVehicle_Green_M…</div>
<div class="a" style="left:1492px;top:416px;width:21px;height:21px;border:1px dashed #5a5a50;box-sizing:border-box;"></div>
<div class="t" style="left:1522.20px;top:409.99px;font-size:10.61px;color:#b4b4b4;transform:scaleX(0.942);">Norm</div>
<svg class="a" style="left:1550px;top:414.3px;" width="8" height="5" viewBox="0 0 8 5"><path d="M1,1 L4.0,4 L7,1" fill="none" stroke="#c0c0c0" stroke-width="1.1"/></svg>
<div class="t" style="left:1526.28px;top:431.10px;font-size:11.05px;color:#b4b4b4;transform:scaleX(0.873);">100</div>
<svg class="a" style="left:1550px;top:436.0px;" width="8" height="5" viewBox="0 0 8 5"><path d="M1,1 L4.0,4 L7,1" fill="none" stroke="#c0c0c0" stroke-width="1.1"/></svg>
<div class="a" style="left:1331px;top:449px;width:234px;height:26px;background:#262626;border:1px solid #3a7ad0;box-sizing:border-box;"></div>
<svg class="a" style="left:1336px;top:456px;" width="15" height="10" viewBox="0 0 15 10"><path d="M1.3,5.0 Q7.5,-2.5 13.7,5.0 Q7.5,12.5 1.3,5.0Z" fill="none" stroke="#d0d0d0" stroke-width="1.3"/><circle cx="7.5" cy="5.0" r="2.4" fill="#d0d0d0"/></svg>
<div class="a" style="left:1358px;top:455px;width:12px;height:12px;border:1px dashed #b0b0b0;box-sizing:border-box;"></div>
<div class="t" style="left:1379.09px;top:455.24px;font-size:11.34px;color:#b4b4b4;transform:scaleX(0.908);">Color selection</div>
<div class="t" style="left:1470.52px;top:455.39px;font-size:10.61px;color:#b4b4b4;transform:scaleX(0.922);">Norm</div>
<svg class="a" style="left:1498px;top:460px;" width="8" height="5" viewBox="0 0 8 5"><path d="M1,1 L4.0,4 L7,1" fill="none" stroke="#c0c0c0" stroke-width="1.1"/></svg>
<div class="t" style="left:1510.85px;top:455.30px;font-size:11.05px;color:#b4b4b4;transform:scaleX(0.902);">100</div>
<svg class="a" style="left:1530px;top:460px;" width="8" height="5" viewBox="0 0 8 5"><path d="M1,1 L4.0,4 L7,1" fill="none" stroke="#c0c0c0" stroke-width="1.1"/></svg>
<svg class="a" style="left:1549px;top:458px;" width="6" height="6" viewBox="0 0 6 6"><path d="M0.5,0.5 L5.5,5.5 M5.5,0.5 L0.5,5.5" stroke="#c8c8c8" stroke-width="1.1"/></svg>
<div class="a" style="left:1258px;top:475px;width:307px;height:1px;background:#2a2a2a;"></div>
<svg class="a" style="left:1264px;top:491px;" width="15" height="10" viewBox="0 0 15 10"><path d="M1.3,5.0 Q7.5,-2.5 13.7,5.0 Q7.5,12.5 1.3,5.0Z" fill="none" stroke="#d0d0d0" stroke-width="1.3"/><circle cx="7.5" cy="5.0" r="2.4" fill="#d0d0d0"/></svg>
<div class="a" style="left:1304px;top:482px;width:25px;height:25px;background:#3e3e3e;border-radius:2px;"></div>
<div class="a" style="left:1305px;top:483px;width:23px;height:23px;background:#3c3828;"></div>
<svg class="a" style="left:1318px;top:496px;" width="8" height="8" viewBox="0 0 8 8"><path d="M3.5,0.5 L7,4 L3.5,7.5 L0,4Z" fill="none" stroke="#e0e0e0" stroke-width="1"/><path d="M0.5,4 L6.5,4 L3.5,7Z" fill="#e0e0e0"/><circle cx="7.3" cy="6.8" r="0.8" fill="#e0e0e0"/></svg>
<div class="a" style="left:1334px;top:483px;width:24px;height:24px;background:#3e3e3e;border-radius:2px;"></div>
<svg class="a" style="left:1335px;top:484px;" width="22" height="22" viewBox="0 0 22 22"><rect width="22" height="22" fill="#fff"/><ellipse cx="12" cy="9" rx="5.5" ry="7" fill="#111"/><ellipse cx="12" cy="9" rx="3" ry="4" fill="#333"/><path d="M3,3 C1,10 3,17 10,20 L19,21" fill="none" stroke="#111" stroke-width="2" stroke-dasharray="2,1.5"/></svg>
<div class="a" style="left:1305px;top:512px;width:23px;height:5px;background:#e8781e;"></div>
<div class="a" style="left:1335px;top:512px;width:22px;height:5px;background:#e8781e;"></div>
<div class="t" style="left:1363.15px;top:492.04px;font-size:11.34px;color:#a6a6a6;transform:scaleX(0.936);">Dirt</div>
<div class="a" style="left:1492px;top:489px;width:21px;height:21px;border:1px dashed #5a5a50;box-sizing:border-box;"></div>
<div class="t" style="left:1522.20px;top:481.69px;font-size:10.61px;color:#b4b4b4;transform:scaleX(0.942);">Norm</div>
<svg class="a" style="left:1550px;top:486px;" width="8" height="5" viewBox="0 0 8 5"><path d="M1,1 L4.0,4 L7,1" fill="none" stroke="#c0c0c0" stroke-width="1.1"/></svg>
<div class="t" style="left:1526.28px;top:502.60px;font-size:11.05px;color:#b4b4b4;transform:scaleX(0.873);">100</div>
<svg class="a" style="left:1550px;top:507.5px;" width="8" height="5" viewBox="0 0 8 5"><path d="M1,1 L4.0,4 L7,1" fill="none" stroke="#c0c0c0" stroke-width="1.1"/></svg>
<div class="a" style="left:1302px;top:520px;width:263px;height:1px;background:#2a2a2a;"></div>
<svg class="a" style="left:1307px;top:528px;" width="15" height="10" viewBox="0 0 15 10"><path d="M1.3,5.0 Q7.5,-2.5 13.7,5.0 Q7.5,12.5 1.3,5.0Z" fill="none" stroke="#d0d0d0" stroke-width="1.3"/><circle cx="7.5" cy="5.0" r="2.4" fill="#d0d0d0"/></svg>
<svg class="a" style="left:1329px;top:526.5px;" width="13" height="13" viewBox="0 0 13 13"><path d="M6.5,0.5 L12.5,3.5 L12.5,9.5 L6.5,12.5 L0.5,9.5 L0.5,3.5Z" fill="#d0d0d0"/><path d="M9.5,4 L5,4 C3,4 3,6.5 5,6.5 L8,6.5 C10,6.5 10,9 8,9 L3.5,9" fill="none" stroke="#333" stroke-width="1.6"/></svg>
<div class="t" style="left:1349.68px;top:526.54px;font-size:11.34px;color:#b4b4b4;transform:scaleX(0.903);">HSL Perceptive</div>
<div class="t" style="left:1472.41px;top:526.54px;font-size:11.34px;color:#b4b4b4;transform:scaleX(0.875);">Repl</div>
<svg class="a" style="left:1498px;top:532px;" width="8" height="5" viewBox="0 0 8 5"><path d="M1,1 L4.0,4 L7,1" fill="none" stroke="#c0c0c0" stroke-width="1.1"/></svg>
<div class="t" style="left:1510.85px;top:526.60px;font-size:11.05px;color:#b4b4b4;transform:scaleX(0.902);">100</div>
<svg class="a" style="left:1530px;top:532px;" width="8" height="5" viewBox="0 0 8 5"><path d="M1,1 L4.0,4 L7,1" fill="none" stroke="#c0c0c0" stroke-width="1.1"/></svg>
<svg class="a" style="left:1549px;top:530px;" width="6" height="6" viewBox="0 0 6 6"><path d="M0.5,0.5 L5.5,5.5 M5.5,0.5 L0.5,5.5" stroke="#c8c8c8" stroke-width="1.1"/></svg>
<div class="a" style="left:1258px;top:547px;width:307px;height:1px;background:#2a2a2a;"></div>
<svg class="a" style="left:1264px;top:563px;" width="15" height="10" viewBox="0 0 15 10"><path d="M1.3,5.0 Q7.5,-2.5 13.7,5.0 Q7.5,12.5 1.3,5.0Z" fill="none" stroke="#d0d0d0" stroke-width="1.3"/><circle cx="7.5" cy="5.0" r="2.4" fill="#d0d0d0"/></svg>
<div class="a" style="left:1304px;top:554px;width:25px;height:25px;background:#3e3e3e;border-radius:2px;"></div>
<div class="a" style="left:1305px;top:555px;width:23px;height:23px;background:#5a4434;"></div>
<svg class="a" style="left:1318px;top:568px;" width="8" height="8" viewBox="0 0 8 8"><path d="M3.5,0.5 L7,4 L3.5,7.5 L0,4Z" fill="none" stroke="#e0e0e0" stroke-width="1"/><path d="M0.5,4 L6.5,4 L3.5,7Z" fill="#e0e0e0"/><circle cx="7.3" cy="6.8" r="0.8" fill="#e0e0e0"/></svg>
<div class="a" style="left:1334px;top:555px;width:24px;height:24px;background:#3e3e3e;border-radius:2px;"></div>
<svg class="a" style="left:1335px;top:556px;" width="22" height="22" viewBox="0 0 22 22"><rect width="22" height="22" fill="#050505"/><path d="M5,4 C1,11 3,19 11,20 C15,20 18,19 20,17" fill="none" stroke="#ddd" stroke-width="0.7"/><path d="M7,5 C5,11 6,16 11,17 C14,17 16,16 18,14" fill="none" stroke="#aaa" stroke-width="0.6"/><ellipse cx="12" cy="8" rx="5" ry="6.5" fill="none" stroke="#888" stroke-width="0.7"/></svg>
<div class="a" style="left:1305px;top:584px;width:23px;height:5px;background:#e8781e;"></div>
<div class="a" style="left:1335px;top:584px;width:22px;height:5px;background:#e8781e;"></div>
<div class="t" style="left:1363.49px;top:564.04px;font-size:11.34px;color:#a6a6a6;transform:scaleX(0.896);">Curvature</div>
<div class="a" style="left:1492px;top:561px;width:21px;height:21px;border:1px dashed #5a5a50;box-sizing:border-box;"></div>
<div class="t" style="left:1522.20px;top:553.69px;font-size:10.61px;color:#b4b4b4;transform:scaleX(0.942);">Norm</div>
<svg class="a" style="left:1550px;top:558px;" width="8" height="5" viewBox="0 0 8 5"><path d="M1,1 L4.0,4 L7,1" fill="none" stroke="#c0c0c0" stroke-width="1.1"/></svg>
<div class="t" style="left:1526.28px;top:574.60px;font-size:11.05px;color:#b4b4b4;transform:scaleX(0.873);">100</div>
<svg class="a" style="left:1550px;top:579.5px;" width="8" height="5" viewBox="0 0 8 5"><path d="M1,1 L4.0,4 L7,1" fill="none" stroke="#c0c0c0" stroke-width="1.1"/></svg>
<div class="a" style="left:1302px;top:592px;width:263px;height:1px;background:#2a2a2a;"></div>
<svg class="a" style="left:1307px;top:600px;" width="15" height="10" viewBox="0 0 15 10"><path d="M1.3,5.0 Q7.5,-2.5 13.7,5.0 Q7.5,12.5 1.3,5.0Z" fill="none" stroke="#d0d0d0" stroke-width="1.3"/><circle cx="7.5" cy="5.0" r="2.4" fill="#d0d0d0"/></svg>
<svg class="a" style="left:1329px;top:598.5px;" width="13" height="13" viewBox="0 0 13 13"><path d="M6.5,0.5 L12.5,3.5 L12.5,9.5 L6.5,12.5 L0.5,9.5 L0.5,3.5Z" fill="#d0d0d0"/><path d="M9.5,4 L5,4 C3,4 3,6.5 5,6.5 L8,6.5 C10,6.5 10,9 8,9 L3.5,9" fill="none" stroke="#333" stroke-width="1.6"/></svg>
<div class="t" style="left:1349.68px;top:598.54px;font-size:11.34px;color:#b4b4b4;transform:scaleX(0.903);">HSL Perceptive</div>
<div class="t" style="left:1472.41px;top:598.54px;font-size:11.34px;color:#b4b4b4;transform:scaleX(0.875);">Repl</div>
<svg class="a" style="left:1498px;top:604px;" width="8" height="5" viewBox="0 0 8 5"><path d="M1,1 L4.0,4 L7,1" fill="none" stroke="#c0c0c0" stroke-width="1.1"/></svg>
<div class="t" style="left:1510.85px;top:598.60px;font-size:11.05px;color:#b4b4b4;transform:scaleX(0.902);">100</div>
<svg class="a" style="left:1530px;top:604px;" width="8" height="5" viewBox="0 0 8 5"><path d="M1,1 L4.0,4 L7,1" fill="none" stroke="#c0c0c0" stroke-width="1.1"/></svg>
<svg class="a" style="left:1549px;top:602px;" width="6" height="6" viewBox="0 0 6 6"><path d="M0.5,0.5 L5.5,5.5 M5.5,0.5 L0.5,5.5" stroke="#c8c8c8" stroke-width="1.1"/></svg>
<div class="a" style="left:1258px;top:619px;width:307px;height:1px;background:#2a2a2a;"></div>
<svg class="a" style="left:1264px;top:635px;" width="15" height="10" viewBox="0 0 15 10"><path d="M1.3,5.0 Q7.5,-2.5 13.7,5.0 Q7.5,12.5 1.3,5.0Z" fill="none" stroke="#d0d0d0" stroke-width="1.3"/><circle cx="7.5" cy="5.0" r="2.4" fill="#d0d0d0"/></svg>
<div class="a" style="left:1304px;top:626px;width:25px;height:25px;background:#3e3e3e;border-radius:2px;"></div>
<div class="a" style="left:1305px;top:627px;width:23px;height:23px;background:#f0f0f0;"></div>
<svg class="a" style="left:1305px;top:627px;" width="23" height="23" viewBox="0 0 23 23"><defs><pattern id="ck" width="5" height="5" patternUnits="userSpaceOnUse"><rect width="5" height="5" fill="#f4f4f4"/><rect width="2.5" height="2.5" fill="#b4b4b4"/><rect x="2.5" y="2.5" width="2.5" height="2.5" fill="#b4b4b4"/></pattern></defs><rect width="23" height="23" fill="url(#ck)"/></svg>
<svg class="a" style="left:1318px;top:640px;" width="8" height="8" viewBox="0 0 8 8"><path d="M3.5,0.5 L7,4 L3.5,7.5 L0,4Z" fill="none" stroke="#e0e0e0" stroke-width="1"/><path d="M0.5,4 L6.5,4 L3.5,7Z" fill="#e0e0e0"/><circle cx="7.3" cy="6.8" r="0.8" fill="#e0e0e0"/></svg>
<div class="a" style="left:1334px;top:627px;width:24px;height:24px;background:#3e3e3e;border-radius:2px;"></div>
<svg class="a" style="left:1335px;top:628px;" width="22" height="22" viewBox="0 0 22 22"><rect width="22" height="22" fill="#0a0a0a"/><path d="M5,5 C1,12 4,19 11,19 C14,19 16,18 18,16" fill="none" stroke="#777" stroke-width="3"/><ellipse cx="12" cy="9" rx="5" ry="6.5" fill="#777"/><rect x="17" y="3" width="4" height="6" fill="#888"/></svg>
<div class="a" style="left:1305px;top:656px;width:23px;height:5px;background:repeating-linear-gradient(90deg,#555 0 1px,#444 1px 2px);"></div>
<div class="a" style="left:1335px;top:656px;width:22px;height:5px;background:#e8781e;"></div>
<div class="t" style="left:1363.49px;top:636.04px;font-size:11.34px;color:#a6a6a6;transform:scaleX(0.900);">Grunge Scratches Dirty</div>
<div class="a" style="left:1492px;top:633px;width:21px;height:21px;border:1px dashed #5a5a50;box-sizing:border-box;"></div>
<div class="t" style="left:1522.20px;top:625.69px;font-size:10.61px;color:#b4b4b4;transform:scaleX(0.942);">Norm</div>
<svg class="a" style="left:1550px;top:630px;" width="8" height="5" viewBox="0 0 8 5"><path d="M1,1 L4.0,4 L7,1" fill="none" stroke="#c0c0c0" stroke-width="1.1"/></svg>
<div class="t" style="left:1526.28px;top:646.60px;font-size:11.05px;color:#b4b4b4;transform:scaleX(0.873);">100</div>
<svg class="a" style="left:1550px;top:651.5px;" width="8" height="5" viewBox="0 0 8 5"><path d="M1,1 L4.0,4 L7,1" fill="none" stroke="#c0c0c0" stroke-width="1.1"/></svg>
<div class="a" style="left:1258px;top:665px;width:307px;height:1px;background:#2a2a2a;"></div>
<svg class="a" style="left:1264px;top:681px;" width="15" height="10" viewBox="0 0 15 10"><path d="M1.3,5.0 Q7.5,-2.5 13.7,5.0 Q7.5,12.5 1.3,5.0Z" fill="none" stroke="#d0d0d0" stroke-width="1.3"/><circle cx="7.5" cy="5.0" r="2.4" fill="#d0d0d0"/></svg>
<div class="a" style="left:1304px;top:672px;width:25px;height:25px;background:#3e3e3e;border-radius:2px;"></div>
<div class="a" style="left:1305px;top:673px;width:23px;height:23px;background:#2a2a2a;"></div>
<svg class="a" style="left:1318px;top:686px;" width="8" height="8" viewBox="0 0 8 8"><path d="M3.5,0.5 L7,4 L3.5,7.5 L0,4Z" fill="none" stroke="#e0e0e0" stroke-width="1"/><path d="M0.5,4 L6.5,4 L3.5,7Z" fill="#e0e0e0"/><circle cx="7.3" cy="6.8" r="0.8" fill="#e0e0e0"/></svg>
<div class="a" style="left:1334px;top:673px;width:24px;height:24px;background:#3e3e3e;border-radius:2px;"></div>
<svg class="a" style="left:1335px;top:674px;" width="22" height="22" viewBox="0 0 22 22"><rect width="22" height="22" fill="#fff"/><path d="M5,4 C1,12 4,19 11,20 C15,20 18,19 20,17" fill="none" stroke="#111" stroke-width="3.2"/><ellipse cx="12" cy="9" rx="5" ry="6.5" fill="#888"/><rect x="15" y="2" width="6" height="7" fill="#222"/></svg>
<div class="a" style="left:1305px;top:702px;width:23px;height:5px;background:#e8781e;"></div>
<div class="a" style="left:1335px;top:702px;width:22px;height:5px;background:#e8781e;"></div>
<div class="t" style="left:1363.50px;top:682.04px;font-size:11.34px;color:#a6a6a6;transform:scaleX(0.878);">Gradation</div>
<div class="a" style="left:1492px;top:679px;width:21px;height:21px;border:1px dashed #5a5a50;box-sizing:border-box;"></div>
<div class="t" style="left:1522.20px;top:671.69px;font-size:10.61px;color:#b4b4b4;transform:scaleX(0.942);">Norm</div>
<svg class="a" style="left:1550px;top:676px;" width="8" height="5" viewBox="0 0 8 5"><path d="M1,1 L4.0,4 L7,1" fill="none" stroke="#c0c0c0" stroke-width="1.1"/></svg>
<div class="t" style="left:1526.28px;top:692.60px;font-size:11.05px;color:#b4b4b4;transform:scaleX(0.873);">100</div>
<svg class="a" style="left:1550px;top:697.5px;" width="8" height="5" viewBox="0 0 8 5"><path d="M1,1 L4.0,4 L7,1" fill="none" stroke="#c0c0c0" stroke-width="1.1"/></svg>
<div class="a" style="left:1302px;top:710px;width:263px;height:1px;background:#2a2a2a;"></div>
<svg class="a" style="left:1307px;top:718px;" width="15" height="10" viewBox="0 0 15 10"><path d="M1.3,5.0 Q7.5,-2.5 13.7,5.0 Q7.5,12.5 1.3,5.0Z" fill="none" stroke="#d0d0d0" stroke-width="1.3"/><circle cx="7.5" cy="5.0" r="2.4" fill="#d0d0d0"/></svg>
<svg class="a" style="left:1329px;top:716.5px;" width="13" height="13" viewBox="0 0 13 13"><path d="M6.5,0.5 L12.5,3.5 L12.5,9.5 L6.5,12.5 L0.5,9.5 L0.5,3.5Z" fill="#d0d0d0"/><path d="M9.5,4 L5,4 C3,4 3,6.5 5,6.5 L8,6.5 C10,6.5 10,9 8,9 L3.5,9" fill="none" stroke="#333" stroke-width="1.6"/></svg>
<div class="t" style="left:1349.68px;top:716.54px;font-size:11.34px;color:#b4b4b4;transform:scaleX(0.903);">HSL Perceptive</div>
<div class="t" style="left:1472.41px;top:716.54px;font-size:11.34px;color:#b4b4b4;transform:scaleX(0.875);">Repl</div>
<svg class="a" style="left:1498px;top:722px;" width="8" height="5" viewBox="0 0 8 5"><path d="M1,1 L4.0,4 L7,1" fill="none" stroke="#c0c0c0" stroke-width="1.1"/></svg>
<div class="t" style="left:1510.85px;top:716.60px;font-size:11.05px;color:#b4b4b4;transform:scaleX(0.902);">100</div>
<svg class="a" style="left:1530px;top:722px;" width="8" height="5" viewBox="0 0 8 5"><path d="M1,1 L4.0,4 L7,1" fill="none" stroke="#c0c0c0" stroke-width="1.1"/></svg>
<svg class="a" style="left:1549px;top:720px;" width="6" height="6" viewBox="0 0 6 6"><path d="M0.5,0.5 L5.5,5.5 M5.5,0.5 L0.5,5.5" stroke="#c8c8c8" stroke-width="1.1"/></svg>
<div class="a" style="left:1258px;top:737px;width:307px;height:1px;background:#2a2a2a;"></div>
<svg class="a" style="left:1264px;top:753px;" width="15" height="10" viewBox="0 0 15 10"><path d="M1.3,5.0 Q7.5,-2.5 13.7,5.0 Q7.5,12.5 1.3,5.0Z" fill="none" stroke="#d0d0d0" stroke-width="1.3"/><circle cx="7.5" cy="5.0" r="2.4" fill="#d0d0d0"/></svg>
<div class="a" style="left:1304px;top:744px;width:25px;height:25px;background:#3e3e3e;border-radius:2px;"></div>
<div class="a" style="left:1305px;top:745px;width:23px;height:23px;background:#4a3d2d;"></div>
<svg class="a" style="left:1318px;top:758px;" width="8" height="8" viewBox="0 0 8 8"><path d="M3.5,0.5 L7,4 L3.5,7.5 L0,4Z" fill="none" stroke="#e0e0e0" stroke-width="1"/><path d="M0.5,4 L6.5,4 L3.5,7Z" fill="#e0e0e0"/><circle cx="7.3" cy="6.8" r="0.8" fill="#e0e0e0"/></svg>
<div class="a" style="left:1305px;top:774px;width:23px;height:5px;background:#e8781e;"></div>
<div class="t" style="left:1333.79px;top:754.04px;font-size:11.34px;color:#a6a6a6;transform:scaleX(0.894);">Base Color</div>
<div class="a" style="left:1492px;top:751px;width:21px;height:21px;border:1px dashed #5a5a50;box-sizing:border-box;"></div>
<div class="t" style="left:1522.20px;top:743.69px;font-size:10.61px;color:#b4b4b4;transform:scaleX(0.942);">Norm</div>
<svg class="a" style="left:1550px;top:748px;" width="8" height="5" viewBox="0 0 8 5"><path d="M1,1 L4.0,4 L7,1" fill="none" stroke="#c0c0c0" stroke-width="1.1"/></svg>
<div class="t" style="left:1526.28px;top:764.60px;font-size:11.05px;color:#b4b4b4;transform:scaleX(0.873);">100</div>
<svg class="a" style="left:1550px;top:769.5px;" width="8" height="5" viewBox="0 0 8 5"><path d="M1,1 L4.0,4 L7,1" fill="none" stroke="#c0c0c0" stroke-width="1.1"/></svg>
<div class="a" style="left:1302px;top:782px;width:263px;height:1px;background:#2a2a2a;"></div>
<svg class="a" style="left:1307px;top:790px;" width="15" height="10" viewBox="0 0 15 10"><path d="M1.3,5.0 Q7.5,-2.5 13.7,5.0 Q7.5,12.5 1.3,5.0Z" fill="none" stroke="#d0d0d0" stroke-width="1.3"/><circle cx="7.5" cy="5.0" r="2.4" fill="#d0d0d0"/></svg>
<svg class="a" style="left:1329px;top:788.5px;" width="13" height="13" viewBox="0 0 13 13"><path d="M6.5,0.5 L12.5,3.5 L12.5,9.5 L6.5,12.5 L0.5,9.5 L0.5,3.5Z" fill="#d0d0d0"/><path d="M9.5,4 L5,4 C3,4 3,6.5 5,6.5 L8,6.5 C10,6.5 10,9 8,9 L3.5,9" fill="none" stroke="#333" stroke-width="1.6"/></svg>
<div class="t" style="left:1349.71px;top:788.54px;font-size:11.34px;color:#b4b4b4;transform:scaleX(0.875);">MatFinish Rough</div>
<div class="t" style="left:1472.41px;top:788.54px;font-size:11.34px;color:#b4b4b4;transform:scaleX(0.875);">Repl</div>
<svg class="a" style="left:1498px;top:794px;" width="8" height="5" viewBox="0 0 8 5"><path d="M1,1 L4.0,4 L7,1" fill="none" stroke="#c0c0c0" stroke-width="1.1"/></svg>
<div class="t" style="left:1510.85px;top:788.60px;font-size:11.05px;color:#b4b4b4;transform:scaleX(0.902);">100</div>
<svg class="a" style="left:1530px;top:794px;" width="8" height="5" viewBox="0 0 8 5"><path d="M1,1 L4.0,4 L7,1" fill="none" stroke="#c0c0c0" stroke-width="1.1"/></svg>
<svg class="a" style="left:1549px;top:792px;" width="6" height="6" viewBox="0 0 6 6"><path d="M0.5,0.5 L5.5,5.5 M5.5,0.5 L0.5,5.5" stroke="#c8c8c8" stroke-width="1.1"/></svg>
<div class="a" style="left:1258px;top:809px;width:307px;height:1px;background:#2a2a2a;"></div>
<svg class="a" style="left:0;top:0;z-index:1" width="1600" height="960" viewBox="0 0 1600 960"><path d="M390.6,396.3 C408,396 426,408 436,422 C441,429 444,436 446,441.5 L449,434 C450,432.5 451,432 453,432 L490.6,432.2 L499.6,434.6 L532,447 L532.7,459 L539.1,460.3 C552,466 565,476 574,486 C582,495 586,508 587,521.4 L588.3,533.3 C585,548 568,560 547.5,567 C520,577 495,584 475.6,586 C440,592 415,596 391.8,596.8 C365,597 345,596 331.9,593.3 C312,589 298,584 293.5,578.9 C287,572 285,566 285.2,559.7 L287.6,535.7 C290,520 294,510 300.7,504.6 C310,494 318,484 324.7,478.2 C327,468 330,460 334.3,451.9 C340,436 347,424 355.8,416 C366,404 378,397 390.6,396.3Z" fill="#001650"/><path d="M390.6,396.3 C408,396 426,408 436,422 C441,429 444,436 446,441.5 L449,434 C450,432.5 451,432 453,432 L490.6,432.2 L499.6,434.6 L532,447 L532.7,459 L539.1,460.3 C552,466 565,476 574,486 C582,495 586,508 587,521.4 L587,526.2 C575,540 560,550 547.5,557.3 C520,566 495,573 475.6,577.7 C440,585 415,588 391.8,588.5 C365,588 345,586 331.9,583.7 C312,578 295,570 285.2,557.3 L287.6,535.7 C290,520 294,510 300.7,504.6 C310,494 318,484 324.7,478.2 C327,468 330,460 334.3,451.9 C340,436 347,424 355.8,416 C366,404 378,397 390.6,396.3Z" fill="#005bff"/><path d="M389.4,401.1 C405,401 418,412 427.7,423.1 C437,436 442,448 444.5,459 C446.5,472 447.5,485 448.1,497.4 C425,499 400,499.5 379.8,499.3 C360,498 345,495 331.9,490.2 L324.7,481 C326,468 330,455 336.7,442.3 C343,430 350,420 360.6,413.5 C368,406 378,401.5 389.4,401.1Z" fill="#ff00ff"/><path d="M446,441.5 L449,434 C450,432.5 451,432 453,432 L490.6,432.2 C510,435 522,440 532,447.5 L530.8,475.8 C524,480 518,482 511.6,484.2 L456.5,495.5 C454,480 452,465 449.3,449.5Z" fill="#ffff00"/><path d="M466,495 L514,486.6 C517,492 519,498 521.2,504.6 C527,520 532,536 535.6,552.5 L493.6,566.4 C491,555 489,544 487.6,533.3 C484,524 480,516 475.6,509.4Z" fill="#002f86"/><path d="M393,538.1 C398,533 405,530 413.4,529.8 L458.9,529.8 C470,531 478,535 481.6,539.3 C479,543 475,546 470.9,547.7 C455,554 440,560 427.7,563.3 C418,564 408,564 399,562.1 C394,556 391,545 393,538.1Z" fill="#00307e"/><path d="M370,557 L390,550.5" stroke="#1e1e1e" stroke-width="7" stroke-linecap="round"/><ellipse cx="394.5" cy="551" rx="4.5" ry="6" fill="#1e1e1e" transform="rotate(-15 394.5 551)"/><path d="M310.3,507 C320,503 330,501 339.1,501 C343,503 345,506 345.1,510.6 C343,518 340,526 336.7,533.3 C331,545 325,555 318.7,564.5 C314,564 311,561 309.1,557.3 C307,548 307,538 307.9,528.6 C308,520 309,512 310.3,507Z" fill="#00307e"/><path d="M311.5,496 C301,501 292,507 288.5,512.5 C290,518 292,522 292.5,527.5 Z" fill="#00307e"/><ellipse cx="310.3" cy="525.3" rx="9.4" ry="13.5" fill="#ff80ff" transform="rotate(-8 310.3 525.3)"/><ellipse cx="279.5" cy="522" rx="15" ry="6" fill="#1e1e1e" transform="rotate(-10 279.5 522)"/><ellipse cx="582" cy="502" rx="4" ry="8" fill="#002f86"/></svg>
<svg class="a" style="left:0;top:0;z-index:10" width="1600" height="960" viewBox="0 0 1600 960"><defs><filter id="sh" x="-30%" y="-30%" width="160%" height="160%"><feGaussianBlur in="SourceAlpha" stdDeviation="2.6"/><feOffset dx="4.5" dy="5" result="b"/><feFlood flood-color="#000" flood-opacity="0.9"/><feComposite in2="b" operator="in"/><feMerge><feMergeNode/><feMergeNode in="SourceGraphic"/></feMerge></filter></defs><rect x="591.5" y="312.5" width="46" height="46" rx="10" fill="none" stroke="#e8dc00" stroke-width="1.6"/><g transform="translate(601.5,325) scale(1.6)"><g transform="rotate(45 8 8)"><circle cx="8" cy="2.6" r="2.6" fill="#c8c8c8"/><rect x="5.3" y="4.6" width="5.4" height="1.8" rx="0.5" fill="#c8c8c8"/><path d="M6.6,6.4 L6.6,13 L8,15.2 L9.4,13 L9.4,6.4" fill="none" stroke="#c8c8c8" stroke-width="0.9"/></g></g><path d="M599.5,289.2 L630.5,289.2 L615,316.5Z" fill="#ffff00" stroke="#dd2a00" stroke-width="5.5" stroke-linejoin="round"/><path d="M1141.5,287 L1141.5,317.5 L1167.5,302.3Z" fill="#ffff00" stroke="#dd2a00" stroke-width="5" stroke-linejoin="round"/><rect x="894.2" y="283.9" width="356.2" height="37.8" rx="6" fill="none" stroke="#ecE400" stroke-width="1.9"/><rect x="1373.5" y="370.5" width="25" height="25" rx="5" fill="none" stroke="#f0e800" stroke-width="1.7"/><rect x="1399.5" y="370.5" width="25" height="25" rx="5" fill="none" stroke="#f0e800" stroke-width="1.7"/><rect x="1257.7" y="404.5" width="307.9" height="409" rx="5.5" fill="none" stroke="#f4ee00" stroke-width="1.8"/><g filter="url(#sh)"><path d="M1406.3,546 L1440,539.4 L1419.9,607.4 L1401.1,608.8 L1415.2,558.1 L1404.4,560Z" fill="#fff" fill-rule="evenodd"/></g><g filter="url(#sh)"><path d="M1417.4,328.3 C1422,324 1428,322.5 1432.5,322.8 C1438,323 1443,325 1444.9,328.3 C1447,332 1446.5,335 1445.9,337.9 C1440,345 1432,350 1422.9,355.1 L1442.1,355.5 L1438.7,363.7 L1411.2,364.1 L1411.9,353.8 C1420,348 1428,343 1433.2,337.9 C1435,335 1434.5,333.5 1433.9,333.1 C1431,331.5 1428,332 1427.7,332.4 C1424,333 1421,334 1418.8,335.2Z" fill="#fff" fill-rule="evenodd"/></g><g filter="url(#sh)"><path d="M1360.7,326.3 L1391.3,323.2 L1391.3,331.7 L1382.3,340.3 C1387,342 1389,345 1388.5,350 C1388,356 1385,360 1381.6,362.7 C1375,366 1367,367 1360.3,366.8 L1355.5,357.9 C1362,358 1370,357 1374,355 C1377,352 1377,349 1375,347.5 C1372,346 1368,346 1364.4,345.5 L1363.7,342 L1379.6,331.7 L1363,333.5Z" fill="#fff" fill-rule="evenodd"/></g><g filter="url(#sh)"><path d="M1086.6,243.9 L1097.7,250.5 L1100.4,240.3 L1117.2,244.3 L1108.3,280.6 L1118.5,281.1 L1114.1,295.2 L1103.9,295.2 L1099,311.6 L1080.9,308.5 L1085.7,295.2 L1061.8,294.8 L1054.3,278Z M1072.9,281.5 L1089.3,281.1 L1097.3,252.3Z" fill="#fff" fill-rule="evenodd"/></g></svg>
<div class="t" style="left:524.04px;top:233.62px;font-size:43.60px;color:#14ec68;transform:scaleX(0.963);z-index:11;">Pick color</div>
<div class="t" style="left:1025.36px;top:49.64px;font-size:42.15px;color:#14ec68;transform:scaleX(1.020);z-index:11;">Properties</div>
<svg class="a" style="left:1562px;top:920px;z-index:12;" width="42" height="42" viewBox="0 0 42 42"><path d="M20.50,9.75 L30.68,15.62 L30.68,27.37 L20.50,33.25 L10.32,27.38 L10.32,15.62Z" fill="none" stroke="#5a2424" stroke-width="9" stroke-linejoin="round"/></svg>

</body></html>
